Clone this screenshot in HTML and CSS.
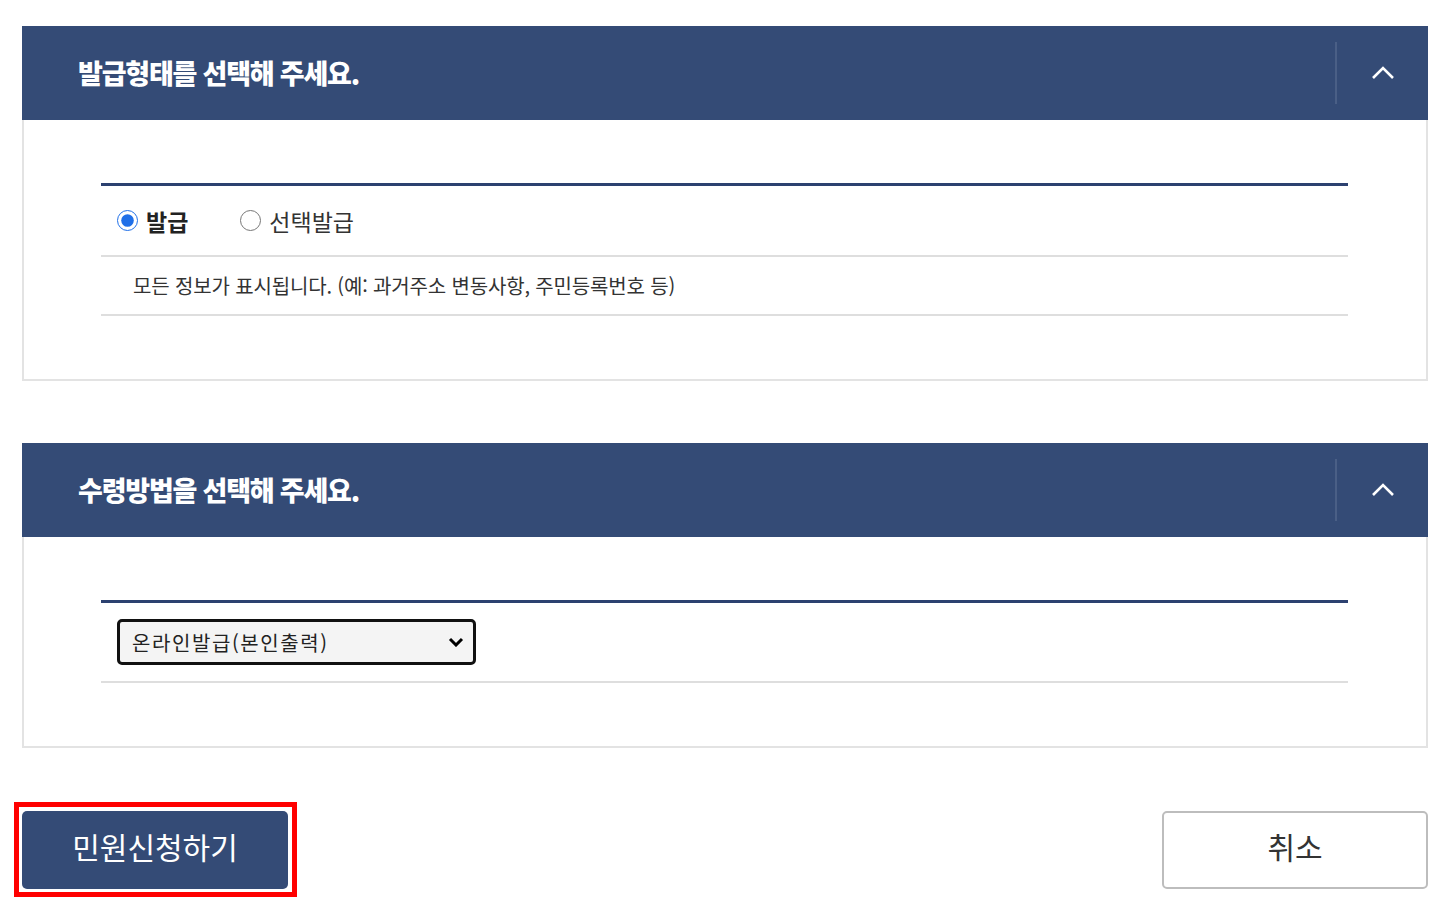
FILE: index.html
```html
<!DOCTYPE html>
<html lang="ko">
<head>
  <meta charset="utf-8">
  <meta name="viewport" content="width=device-width, initial-scale=1.0">
  <title>민원신청</title>
  <link rel="stylesheet" href="styles.css">
</head>
<body>

  <div class="page">

    <section class="panel">
      <div class="panel-head">
        <h2>발급형태를 선택해 주세요.</h2>
        <button class="toggle" type="button" aria-label="접기">
          <svg width="24" height="16" viewBox="0 0 24 16"><path d="M2 13 L12 3 L22 13" fill="none" stroke="#fff" stroke-width="2.6"/></svg>
        </button>
      </div>
      <div class="panel-body">
        <div class="box">
          <div class="row radio-row">
            <label class="radio checked"><input type="radio" name="issue" checked> 발급</label>
            <label class="radio"><input type="radio" name="issue"> 선택발급</label>
          </div>
          <div class="row desc">모든 정보가 표시됩니다. (예: 과거주소 변동사항, 주민등록번호 등)</div>
        </div>
      </div>
    </section>

    <section class="panel">
      <div class="panel-head">
        <h2>수령방법을 선택해 주세요.</h2>
        <button class="toggle" type="button" aria-label="접기">
          <svg width="24" height="16" viewBox="0 0 24 16"><path d="M2 13 L12 3 L22 13" fill="none" stroke="#fff" stroke-width="2.6"/></svg>
        </button>
      </div>
      <div class="panel-body">
        <div class="box">
          <div class="row select-row">
            <select class="receive">
              <option>온라인발급(본인출력)</option>
            </select>
          </div>
        </div>
      </div>
    </section>

    <div class="actions">
      <span class="highlight">
        <button class="btn primary" type="button">민원신청하기</button>
      </span>
      <button class="btn cancel" type="button">취소</button>
    </div>

  </div>

</body>
</html>
```

FILE: styles.css
```css
body {
  margin: 0;
  font-family: "Noto Sans CJK KR", "Noto Sans", sans-serif;
  color: #222;
  background: #fff;
}
.page {
  padding: 26px 25px 20px 22px;
}
.panel {
  border: 2px solid #e3e3e3;
  border-top: none;
}
.panel + .panel {
  margin-top: 62px;
}
.panel-head {
  height: 94px;
  background-color: #344b76;
  display: flex;
  align-items: center;
  margin: 0 -2px;
}
.panel-head h2 {
  flex: 1;
  margin: 0;
  padding-left: 56px;
  color: #fff;
  font-size: 27px;
  font-weight: 900;
  letter-spacing: -1.2px;
  line-height: 1;
  padding-bottom: 2px;
}
.toggle {
  width: 93px;
  height: 62px;
  border: none;
  border-left: 2px solid #4a5f86;
  background: none;
  display: flex;
  align-items: center;
  justify-content: center;
  padding: 0;
}
.panel-body {
  padding: 63px 78px 63px 77px;
}
.box {
  border-top: 3px solid #2c4170;
}
.row {
  border-bottom: 2px solid #dedede;
}
.radio-row {
  height: 69px;
  display: flex;
  align-items: center;
  padding-left: 16px;
  gap: 52px;
}
.radio {
  display: flex;
  align-items: center;
  gap: 8px;
  font-size: 23px;
  color: #333;
}
.radio.checked {
  font-weight: 700;
  color: #222;
}
.radio input {
  margin: 0;
  width: 21px;
  height: 21px;
  accent-color: #1f6fe8;
}
.desc {
  height: 57px;
  display: flex;
  align-items: center;
  padding-left: 32px;
  font-size: 20px;
  letter-spacing: -0.15px;
  color: #333;
}
.select-row {
  height: 78px;
  display: flex;
  align-items: center;
  padding-left: 16px;
}
.receive {
  appearance: none;
  width: 359px;
  height: 46px;
  border: 3px solid #111;
  border-radius: 5px;
  background-color: #f4f4f4;
  background-image: url("data:image/svg+xml;utf8,<svg xmlns='http://www.w3.org/2000/svg' width='16' height='10' viewBox='0 0 16 10'><path d='M2 2 L8 8 L14 2' fill='none' stroke='%23000' stroke-width='3'/></svg>");
  background-repeat: no-repeat;
  background-position: right 9px center;
  font-family: inherit;
  font-size: 20px;
  letter-spacing: 1.6px;
  color: #222;
  padding: 0 12px;
}
.actions {
  display: flex;
  justify-content: space-between;
  align-items: flex-start;
  margin-top: 54px;
}
.highlight {
  display: inline-block;
  border: 5px solid #ff0000;
  padding: 4px 4px 3px 3px;
  margin-left: -8px;
}
.btn {
  display: block;
  width: 266px;
  height: 78px;
  border-radius: 5px;
  font-family: inherit;
  font-size: 30px;
  padding: 0 0 8px;
  cursor: pointer;
}
.primary {
  background-color: #344b76;
  color: #fff;
  border: none;
}
.cancel {
  background: #fff;
  color: #333;
  border: 2px solid #bdbdbd;
  margin-top: 9px;
}
```
